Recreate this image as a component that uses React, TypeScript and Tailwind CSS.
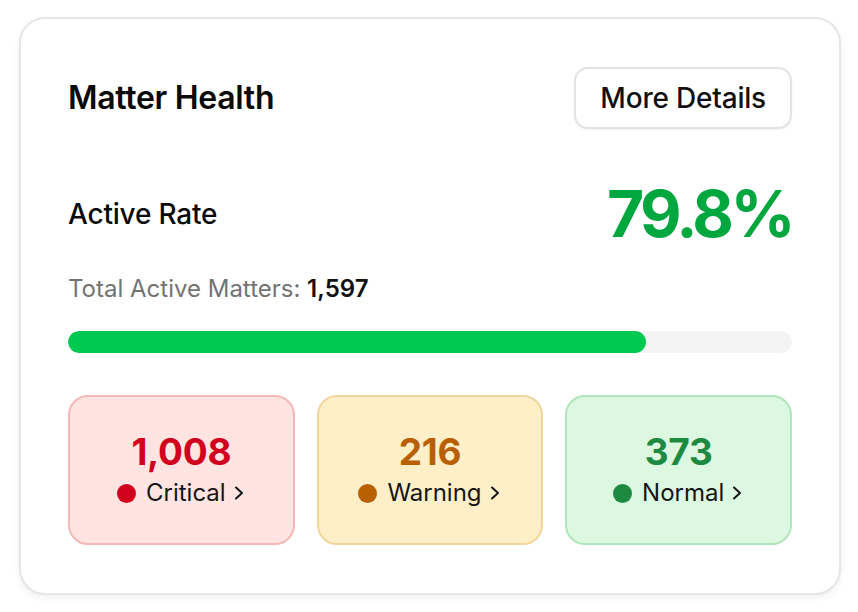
import React from 'react';

type Stat = {
  value: string;
  label: string;
  box: string;
  num: string;
  dot: string;
};

const stats: Stat[] = [
  {
    value: '1,008',
    label: 'Critical',
    box: 'bg-[#ffe4e1] border-[#f5b8b6]',
    num: 'text-[#d1001c]',
    dot: 'bg-[#d1001c]',
  },
  {
    value: '216',
    label: 'Warning',
    box: 'bg-[#ffefc9] border-[#f2d59c]',
    num: 'text-[#b85f00]',
    dot: 'bg-[#b85f00]',
  },
  {
    value: '373',
    label: 'Normal',
    box: 'bg-[#dcf8e1] border-[#b2e5bc]',
    num: 'text-[#1e8a41]',
    dot: 'bg-[#1e8a41]',
  },
];

export default function App() {
  const rate = 79.8;

  return (
    <div className="min-h-[612px] w-[858px] bg-white pl-[19px] pt-[17px] font-['Inter',sans-serif] text-[#111]">
      <div className="w-[822px] rounded-[26px] border-2 border-[#e6e6e6] bg-white px-[47px] pt-[48px] pb-[48px] shadow-[0_3px_6px_rgba(0,0,0,0.06)]">
        {/* Header */}
        <div className="flex items-center justify-between">
          <h2 className="text-[32px] leading-[40px] font-semibold tracking-[-0.3px] text-[#0a0a0a]">Matter Health</h2>
          <button className="h-[62px] rounded-[14px] border-2 border-[#e3e3e3] bg-white px-[24px] text-[28px] leading-[32px] font-medium tracking-[-0.2px] text-[#111] shadow-[0_1px_2px_rgba(0,0,0,0.05)]">
            More Details
          </button>
        </div>

        {/* Active rate */}
        <div className="mt-[53px] flex items-center justify-between">
          <span className="text-[28px] leading-[32px] font-medium tracking-[-0.2px] text-[#0a0a0a]">Active Rate</span>
          <span className="text-[64px] leading-[64px] font-bold tracking-[-3.5px] text-green-600">{rate}%</span>
        </div>

        <p className="mt-[28px] text-[24px] leading-[30px] text-[#737373]">
          Total Active Matters: <span className="font-semibold text-[#111]">1,597</span>
        </p>

        {/* Progress */}
        <div className="mt-[27px] h-[22px] w-full overflow-hidden rounded-full bg-[#f3f3f3]">
          <div className="h-full rounded-full bg-green-500" style={{ width: `${rate}%` }} />
        </div>

        {/* Status boxes */}
        <div className="mt-[42px] grid grid-cols-3 gap-[22px]">
          {stats.map((s) => (
            <div
              key={s.label}
              className={`flex h-[150px] flex-col items-center justify-center gap-[6px] rounded-[20px] border-2 ${s.box}`}
            >
              <span className={`text-[37px] leading-[40px] font-bold tracking-[-0.3px] ${s.num}`}>{s.value}</span>
              <span className="flex items-center text-[24px] leading-[30px] text-[#161616]">
                <span className={`mr-[10px] h-[19px] w-[19px] rounded-full ${s.dot}`} />
                {s.label}
                <svg className="ml-[6px]" width="14" height="16" viewBox="0 0 14 16" fill="none">
                  <path d="M4 2.5 L10 8 L4 13.5" stroke="#161616" strokeWidth="2" strokeLinecap="round" strokeLinejoin="round" />
                </svg>
              </span>
            </div>
          ))}
        </div>
      </div>
    </div>
  );
}
